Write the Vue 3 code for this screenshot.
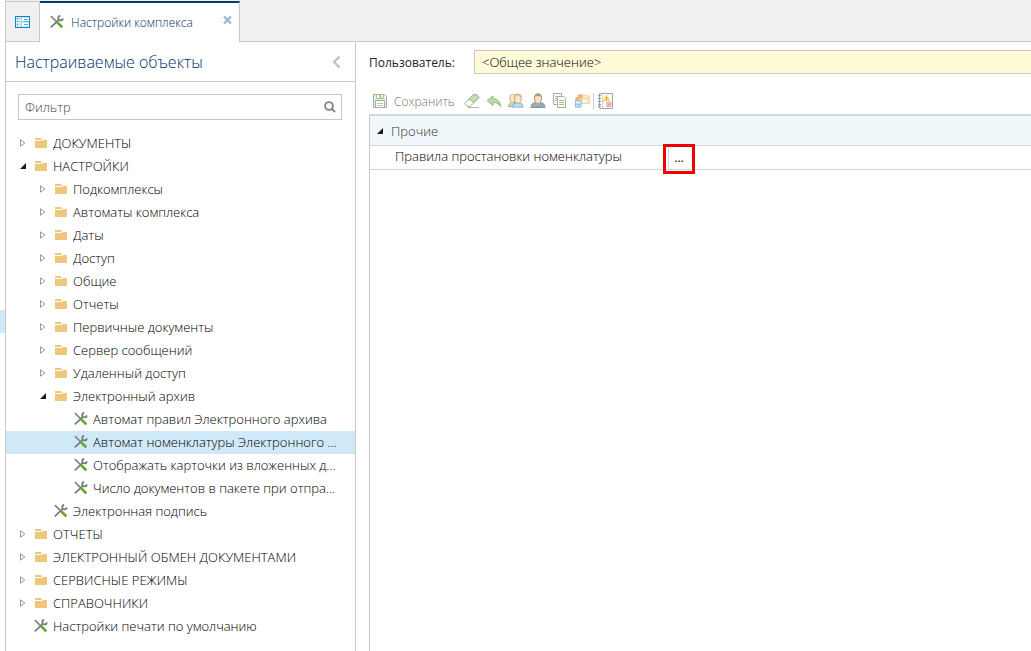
<script setup>
import { ref } from 'vue'

const filter = ref('')
const user = ref('<Общее значение>')
const selected = ref('Автомат номенклатуры Электронного ...')

const rows = [
  { text: 'ДОКУМЕНТЫ', level: 0, kind: 'closed' },
  { text: 'НАСТРОЙКИ', level: 0, kind: 'open' },
  { text: 'Подкомплексы', level: 1, kind: 'closed' },
  { text: 'Автоматы комплекса', level: 1, kind: 'closed' },
  { text: 'Даты', level: 1, kind: 'closed' },
  { text: 'Доступ', level: 1, kind: 'closed' },
  { text: 'Общие', level: 1, kind: 'closed' },
  { text: 'Отчеты', level: 1, kind: 'closed' },
  { text: 'Первичные документы', level: 1, kind: 'closed' },
  { text: 'Сервер сообщений', level: 1, kind: 'closed' },
  { text: 'Удаленный доступ', level: 1, kind: 'closed' },
  { text: 'Электронный архив', level: 1, kind: 'open' },
  { text: 'Автомат правил Электронного архива', level: 2, kind: 'leaf' },
  { text: 'Автомат номенклатуры Электронного ...', level: 2, kind: 'leaf' },
  { text: 'Отображать карточки из вложенных д...', level: 2, kind: 'leaf' },
  { text: 'Число документов в пакете при отпра...', level: 2, kind: 'leaf' },
  { text: 'Электронная подпись', level: 1, kind: 'leaf' },
  { text: 'ОТЧЕТЫ', level: 0, kind: 'closed' },
  { text: 'ЭЛЕКТРОННЫЙ ОБМЕН ДОКУМЕНТАМИ', level: 0, kind: 'closed' },
  { text: 'СЕРВИСНЫЕ РЕЖИМЫ', level: 0, kind: 'closed' },
  { text: 'СПРАВОЧНИКИ', level: 0, kind: 'closed' },
  { text: 'Настройки печати по умолчанию', level: 0, kind: 'leaf' }
]
</script>

<template>
  <svg class="defs" aria-hidden="true">
    <symbol id="tools" viewBox="0 0 14 14">
      <path d="M.9 1.2l5.600 5.500" stroke="#85898e" stroke-width="1.800" />
      <path d="M.8 12.300L9 4.700" stroke="#777b80" stroke-width="1.700" />
      <path d="M10.200.8a2.300 2.300 0 1 0 2.600 2.500" fill="none" stroke="#777b80" stroke-width="1.800" />
      <path d="M7.300 7.300l4.200 4.200" stroke="#5c9c22" stroke-width="2.600" stroke-linecap="round" />
      <path d="M7.400 7.200l4 4" stroke="#8cc152" stroke-width=".8" />
    </symbol>
    <symbol id="folder" viewBox="0 0 12 10">
      <path d="M0 0h6l1 2H0zM0 3h7l1-1h4v8H0z" fill="#efc77c" />
    </symbol>
  </svg>
  <div class="app">
    <div class="gutter"><span class="mark"></span></div>
    <div class="shell">
      <nav class="tabs">
        <button class="home" aria-label="Главная">
          <svg width="16" height="12" viewBox="0 0 16 12">
            <rect x=".5" y=".5" width="14" height="11" fill="#d5edf9" stroke="#0c83c4" />
            <path d="M2 2.500h1M2 5.500h1M2 8.500h1" stroke="#0c83c4" />
            <path d="M4 2.500h1M4 5.500h1" stroke="#efb44a" />
            <path d="M7 2h7v3H7zM7 7h7v3H7z" fill="#fff" />
            <path d="M9 3.500h4M8 5.500h6M9 8.500h4" stroke="#55b1df" />
            <path d="M6.500 1v10" stroke="#9ed2ec" />
          </svg>
        </button>
        <div class="tab">
          <svg class="tool" width="14" height="14"><use href="#tools" /></svg>
          <span class="tab-title">Настройки комплекса</span>
          <button class="close" aria-label="Закрыть">
            <svg width="9" height="8" viewBox="0 0 9 8"><path d="M1 .5l7 7M8 .5l-7 7" stroke="#a3b6d0" stroke-width="2.400" /></svg>
          </button>
        </div>
        <div class="rest"></div>
      </nav>
      <div class="body">
        <aside class="side">
          <header class="side-head">
            <h1>Настраиваемые объекты</h1>
            <button aria-label="Свернуть">
              <svg width="9" height="14" viewBox="0 0 9 14"><path d="M7.500 1.500L2 7l5.500 5.500" fill="none" stroke="#adbfd8" stroke-width="2" /></svg>
            </button>
          </header>
          <div class="filter">
            <input v-model="filter" type="text" placeholder="Фильтр" aria-label="Фильтр" />
            <button aria-label="Найти">
              <svg width="12" height="12" viewBox="0 0 12 12"><circle cx="5" cy="5" r="3.900" fill="none" stroke="#858585" stroke-width="1.900" /><path d="M7.500 7.500L11 11" stroke="#858585" stroke-width="2" /></svg>
            </button>
          </div>
          <ul class="tree">
            <li v-for="r in rows" :key="r.text" :class="['row', 'level' + r.level, { on: r.text === selected }]" @click="selected = r.text">
              <span class="arrow">
                <svg v-if="r.kind === 'closed'" width="6" height="8" viewBox="0 0 6 8"><path d="M.5.8L4.800 4 .5 7.200z" fill="#fff" stroke="#999" /></svg>
                <svg v-else-if="r.kind === 'open'" width="6" height="6" viewBox="0 0 6 6"><path d="M6 0v6H0z" fill="#1c1c1c" /></svg>
              </span>
              <span class="icon">
                <svg v-if="r.kind === 'leaf'" width="14" height="14"><use href="#tools" /></svg>
                <svg v-else class="folder" width="12" height="10"><use href="#folder" /></svg>
              </span>
              <span class="label">{{ r.text }}</span>
            </li>
          </ul>
        </aside>
        <main class="main">
          <div class="user">
            <label for="user">Пользователь:</label>
            <input id="user" v-model="user" type="text" />
          </div>
          <div class="toolbar">
            <button class="save" disabled>
              <svg width="14" height="14" viewBox="0 0 14 14">
                <path d="M.5.5h11l2 2v11H.5z" fill="#e8f2e0" stroke="#a6aea2" />
                <path d="M3.500.5h7v4h-7z" fill="#fff" stroke="#9fc48c" /><path d="M7.500 1v3" stroke="#9fc48c" stroke-width="2" />
                <path d="M2.500 6.500h9v7h-9z" fill="#fff" stroke="#a6aea2" /><path d="M4 9.500h6M4 11.500h6" stroke="#b9c4b3" />
              </svg>
              <span class="save-text">Сохранить</span>
            </button>
            <button aria-label="Очистить">
              <svg width="16" height="16" viewBox="0 0 16 16">
                <path d="M.8 10.500L9.500 1.500h3l2.500 3L6 13.500H3z" fill="#fff" stroke="#a5aaa3" />
                <path d="M4.800 6.300L9.500 1.500h3l2.500 3-4.800 5z" fill="#c3e0b4" stroke="#9ab48e" />
                <path d="M4 14.500h11" stroke="#b0b5ae" />
              </svg>
            </button>
            <button aria-label="Отменить">
              <svg width="16" height="16" viewBox="0 0 16 16"><path d="M1 7.500L7 3v3c4.500 0 7.200 2.300 7.500 7.500C12.800 10.500 10.500 9.500 7 9.500v3z" fill="#b9dda9" stroke="#8ebb7b" /></svg>
            </button>
            <button aria-label="Пользователи">
              <svg width="16" height="16" viewBox="0 0 17 16">
                <path d="M.5 14c0-3 2-4 4-4.500h4V14z" fill="#c2ddb4" stroke="#94b883" />
                <path d="M2 3.500C2 0 8 0 8 3.500V7L6 9.500H4L2 7z" fill="#f9e4c6" stroke="#c8a77d" />
                <path d="M4.500 14.500c0-3 1.500-4 4-4.500h3.500c2.500.5 4 1.500 4 4.500z" fill="#b9ddf0" stroke="#79afcf" />
                <path d="M7 4c0-4 7-4 7 0v3.500l-2 3H9l-2-3z" fill="#fae5c9" stroke="#c8a77d" />
                <path d="M7 4c1-4 6-4 7 0" fill="none" stroke="#d5b98e" stroke-width="2" />
              </svg>
            </button>
            <button aria-label="Пользователь">
              <svg width="16" height="16" viewBox="0 0 16 16">
                <path d="M1 14.500c0-3 1.500-4.500 4.500-5h5c3 .5 4.500 2 4.500 5z" fill="#9aa8b8" stroke="#8292a4" />
                <path d="M6 10l2 3 2-3z" fill="#eef4f8" /><path d="M8 11v3" stroke="#6b91b7" />
                <path d="M4.500 4c0-4.500 7-4.500 7 0v3l-2 3.500h-3l-2-3.500z" fill="#f8dfc1" stroke="#bc9d79" />
                <path d="M4.500 4C5-.5 11-.5 11.500 4c-2-1.500-5-1.500-7 0z" fill="#a99a88" />
              </svg>
            </button>
            <button aria-label="Копировать">
              <svg width="16" height="16" viewBox="0 0 16 16">
                <path d="M1.500.5h8v11h-8z" fill="#fff" stroke="#a7ada5" /><path d="M3 3.500h3M3 5.500h2M3 7.500h2" stroke="#9fc58e" />
                <path d="M5.500 3.500h6l2 2v9h-8z" fill="#fff" stroke="#a7ada5" /><path d="M7 7.500h5M7 9.500h5M7 11.500h5" stroke="#9fc58e" />
              </svg>
            </button>
            <button aria-label="Перенести">
              <svg width="16" height="16" viewBox="0 0 17 16">
                <path d="M6.500 1.500h5l1 1h4v8h-10z" fill="#fbe8c7" stroke="#eed3a2" /><path d="M8 5.500h7v5H8z" fill="#fff4df" stroke="#eed3a2" />
                <path d="M1.500 7h6v7.500h-6z" fill="#c4e3f4" stroke="#7db9dc" /><path d="M2 9.500h5" stroke="#fff" /><path d="M3 11.500h3" stroke="#6bb0d8" />
                <path d="M2 8V5l3-2-1-1.500h4.500V5L7 4.200 4 6.500V8z" fill="#f6b67a" stroke="#f0aa68" stroke-width=".8" />
              </svg>
            </button>
            <span class="split"></span>
            <button aria-label="Журнал">
              <svg width="16" height="16" viewBox="0 0 16 16">
                <path d="M2.500.5h13v15h-13z" fill="#fff" stroke="#a6a6a6" /><path d="M1 2.500h3M1 5.500h3M1 8.500h3M1 11.500h3M1 13.500h3" stroke="#979797" />
                <path d="M5.500 1v14" stroke="#d2d2d2" />
                <path d="M9.500 2L13 8H6z" fill="#ffe97c" stroke="#f3d468" /><path d="M9.500 4v2M9.500 6.500v1" stroke="#bc8d32" />
                <circle cx="12" cy="11.500" r="2.500" fill="#fbd8dc" stroke="#e79ca5" /><path d="M11 10.500l2 2M13 10.500l-2 2" stroke="#dc7b87" />
              </svg>
            </button>
          </div>
          <section class="grid">
            <div class="group">
              <svg width="6" height="6" viewBox="0 0 6 6"><path d="M6 0v6H0z" fill="#1c1c1c" /></svg>
              <h2>Прочие</h2>
            </div>
            <div class="prop">
              <span class="name">Правила простановки номенклатуры</span>
              <div class="value"><button class="more" aria-label="Изменить">...</button></div>
            </div>
          </section>
        </main>
      </div>
    </div>
  </div>
</template>

<style>
body { margin: 0; background: #fff; }
</style>

<style scoped>
* { box-sizing: border-box; }
svg { display: block; flex: none; }
.defs { position: absolute; width: 0; height: 0; }
button { border: 0; padding: 0; background: none; font: inherit; color: inherit; }
input { font: inherit; color: inherit; border-radius: 0; outline: 0; }
h1, h2 { margin: 0; font-weight: inherit; }
.app { display: flex; height: 100vh; overflow: hidden; font: 300 13px/18px "Open Sans", "Noto Sans", sans-serif; color: #000; }
.gutter { width: 5px; flex: none; padding-top: 310px; }
.mark { display: block; height: 23px; background: #d0e9f9; }
.shell { flex: 1; min-width: 0; display: flex; flex-direction: column; border-left: 1px solid #c8c8c8; }
.tabs { display: flex; height: 42px; flex: none; background: #f0f0f0; }
.home { width: 34px; border: solid #c8c8c8; border-width: 1px 1px 1px 0; padding-left: 9px; margin-top: 1px; }
.tab { width: 200px; display: flex; margin-top: 1px; padding: 0 7px 0 10px; border-top: 2px solid #003f73; border-right: 1px solid #c8c8c8; background: #fff; font-size: 12px; color: #003468; }
.tool { margin-top: 12px; }
.tab-title { flex: 1; padding: 11px 0 0 7px; white-space: nowrap; }
.close { align-self: flex-start; margin-top: 13px; }
.rest { flex: 1; border-bottom: 1px solid #c8c8c8; }
.body { flex: 1; min-height: 0; display: flex; }
.side { width: 350px; flex: none; border-right: 1px solid #c8c8c8; }
.side-head { height: 40px; display: flex; align-items: center; justify-content: space-between; padding: 0 14px 0 9px; border-bottom: 1px solid #c8c8c8; color: #003468; }
.side-head h1 { font-size: 16px; line-height: 22px; }
.filter { display: flex; height: 26px; margin: 12px 13px 11px 12px; border: 1px solid #c8c8c8; padding-right: 5px; }
.filter input { flex: 1; min-width: 0; border: 0; padding: 0 6px; background: none; }
.filter input::placeholder { color: #444; opacity: 1; }
.tree { list-style: none; margin: 0; padding: 1px 0 0; font-weight: 330; }
.row { display: flex; align-items: center; height: 23px; padding: 0 8px 2px 0; cursor: default; }
.level0 { padding-left: 14px; }
.level1 { padding-left: 34px; }
.level2 { padding-left: 54px; }
.on { background: #d0e9f9; }
.arrow { width: 14px; display: flex; flex: none; }
.icon { width: 19px; display: flex; flex: none; }
.folder { margin-left: 1px; }
.label { overflow: hidden; text-overflow: ellipsis; white-space: nowrap; }
.main { flex: 1; min-width: 0; display: flex; flex-direction: column; padding-left: 13px; }
.user { display: flex; align-items: center; padding-top: 8px; }
.user label { width: 105px; flex: none; padding-top: 2px; font-size: 12px; font-weight: 400; color: #222; }
.user input { flex: 1; min-width: 0; height: 24px; border: 1px solid #c8c8c8; border-right: 0; background: #fffbd8; padding: 0 7px; }
.toolbar { display: flex; align-items: center; gap: 6px; height: 40px; padding: 14px 0 0 4px; }
.save { display: flex; align-items: center; gap: 7px; margin-right: 3px; font-size: 12px; color: #777; }
.save-text { padding-top: 2px; }
.split { width: 1px; height: 16px; margin: 0 -3px; background: #ccc; }
.grid { flex: 1; border-left: 1px solid #c8c8c8; border-top: 2px solid #cdd8e3; }
.group { display: flex; align-items: center; gap: 8px; height: 30px; padding-left: 7px; background: #f0f7fb; border-bottom: 1px solid #cdd8e3; color: #333; }
.group h2 { font-size: 13px; }
.prop { display: flex; height: 24px; border-bottom: 1px solid #cdd8e3; }
.name { width: 298px; flex: none; padding: 1px 0 0 25px; }
.value { flex: 1; border-left: 1px solid #cdd8e3; }
.more { width: 32px; height: 30px; margin: -2px 0 0 -6px; padding-bottom: 2px; display: block; border: 3px solid #f10000; font-size: 12px; font-weight: 400; line-height: 18px; }
</style>
